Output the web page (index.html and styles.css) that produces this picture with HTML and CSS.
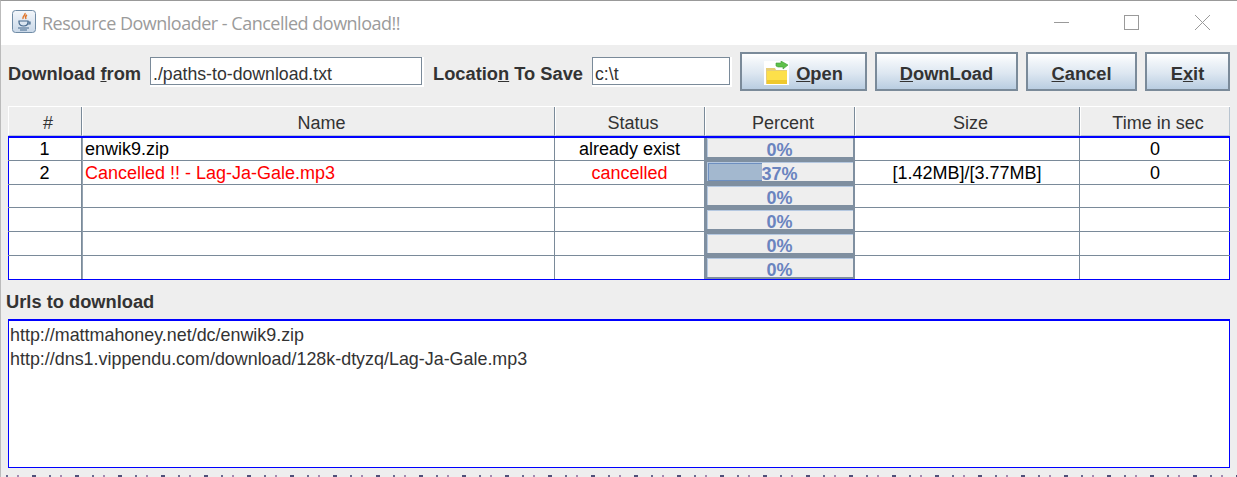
FILE: index.html
```html
<!DOCTYPE html>
<html lang="en">
<head>
<meta charset="utf-8">
<title>Resource Downloader</title>
<link rel="stylesheet" href="styles.css">
</head>
<body>
<div class="window">
  <header class="titlebar">
    <svg class="app-icon" width="24" height="23" viewBox="0 0 24 23">
      <defs><linearGradient id="ig" x1="0" y1="0" x2="0" y2="1"><stop offset="0" stop-color="#f4f7fb"/><stop offset="1" stop-color="#c9d8e8"/></linearGradient></defs>
      <rect x="0.5" y="0.5" width="23" height="22" rx="3" fill="url(#ig)" stroke="#6f8ba5"/>
      <path d="M13 3c1 2-3 3-2 6M15 5c-2 1-2 2-1 4" fill="none" stroke="#e0752a" stroke-width="1.400"/>
      <path d="M7 11h9v1c0 3-2 4-4.500 4S7 15 7 12zM16 12h2v2h-2.500" fill="none" stroke="#44688c" stroke-width="1.200"/>
      <path d="M6 18h11M8 20h7" stroke="#44688c" stroke-width="1.100"/>
    </svg>
    <span class="title">Resource Downloader - Cancelled download!!</span>
    <div class="controls">
      <svg width="70" height="44" viewBox="0 0 70 44"><path d="M27 21.500h15" stroke="#9a9a9a"/></svg>
      <svg width="70" height="44" viewBox="0 0 70 44"><rect x="27.500" y="14.500" width="14" height="14" fill="none" stroke="#9a9a9a"/></svg>
      <svg width="70" height="44" viewBox="0 0 70 44"><path d="M28 14l15 15M43 14L28 29" stroke="#9a9a9a"/></svg>
    </div>
  </header>
  <main class="content">
    <div class="toolbar">
      <label class="lbl lbl-from">Download <u>f</u>rom</label>
      <div class="field field-from">./paths-to-download.txt</div>
      <label class="lbl lbl-loc">Locatio<u>n</u> To Save</label>
      <div class="field field-loc">c:\t</div>
      <button class="btn btn-open">
        <svg width="25" height="24" viewBox="0 0 25 24">
          <rect width="25" height="24" fill="#fff"/>
          <path d="M12 5V2h5V0l7 4-5 4V6h-5z" fill="#5ec04a" stroke="#3d9a35" stroke-width="0.600"/>
          <path d="M2 7h9l1 2h11v14H2z" fill="#e6cd76"/>
          <rect x="3" y="10" width="20" height="13" fill="#fde04a"/>
          <rect x="3" y="19" width="20" height="4" fill="#efc92e"/>
        </svg>
        <span><u>O</u>pen</span>
      </button>
      <button class="btn btn-dl"><span><u>D</u>ownLoad</span></button>
      <button class="btn btn-cancel"><span><u>C</u>ancel</span></button>
      <button class="btn btn-exit"><span>E<u>x</u>it</span></button>
    </div>
    <section class="table">
      <div class="thead">
        <div>#</div><div>Name</div><div>Status</div><div>Percent</div><div>Size</div><div>Time in sec</div>
      </div>
      <div class="tbody">
        <div class="row">
          <div class="c">1</div><div class="name">enwik9.zip</div><div class="c">already exist</div>
          <div class="pct"><div class="bar"><span class="val">0%</span></div></div>
          <div class="c"></div><div class="c">0</div>
        </div>
        <div class="row err">
          <div class="c blk">2</div><div class="name">Cancelled !! - Lag-Ja-Gale.mp3</div><div class="c">cancelled</div>
          <div class="pct"><div class="bar"><div class="fill" style="width:37%"></div><span class="val">37%</span></div></div>
          <div class="c blk">[1.42MB]/[3.77MB]</div><div class="c blk">0</div>
        </div>
        <div class="row"><div></div><div class="name"></div><div></div><div class="pct"><div class="bar"><span class="val">0%</span></div></div><div></div><div></div></div>
        <div class="row"><div></div><div class="name"></div><div></div><div class="pct"><div class="bar"><span class="val">0%</span></div></div><div></div><div></div></div>
        <div class="row"><div></div><div class="name"></div><div></div><div class="pct"><div class="bar"><span class="val">0%</span></div></div><div></div><div></div></div>
        <div class="row"><div></div><div class="name"></div><div></div><div class="pct"><div class="bar"><span class="val">0%</span></div></div><div></div><div></div></div>
      </div>
    </section>
    <h2 class="urls-label">Urls to download</h2>
    <div class="urls">
      <div>http://mattmahoney.net/dc/enwik9.zip</div>
      <div>http://dns1.vippendu.com/download/128k-dtyzq/Lag-Ja-Gale.mp3</div>
    </div>
  </main>
  <div class="under"></div>
</div>
</body>
</html>
```
FILE: styles.css
```css
* { box-sizing: border-box; }
html, body { margin: 0; height: 100%; overflow: hidden; }
body { font-family: "Liberation Sans", Arial, sans-serif; color: #333; background: #eee; }
.window {
  height: 477px; display: flex; flex-direction: column;
  border-top: 1px solid #999; border-left: 1px solid #bbb;
}
.titlebar { height: 44px; flex: none; background: #fff; display: flex; align-items: center; padding-left: 11px; }
.app-icon { flex: none; margin-top: -3px; }
.title { margin-left: 6px; font: 18px "Open Sans", sans-serif; color: #9b9b9b; white-space: nowrap; letter-spacing: -0.5px; }
.controls { margin-left: auto; display: flex; }
.controls svg { display: block; }
.content { flex: 1; min-height: 0; background: #eee; padding: 0 7px; display: flex; flex-direction: column; }
.toolbar { height: 61px; flex: none; display: flex; align-items: center; padding-bottom: 8px; }
.lbl { font-weight: 700; font-size: 18.300px; color: #333; white-space: nowrap; padding-top: 5px; }
.lbl-from { width: 142px; }
.lbl-loc { margin-left: 11px; width: 159px; }
.field {
  height: 28px; margin-top: -1px; background: #fff; border: 1px solid #7a8a99;
  box-shadow: 1px 1px 0 1px #fff; font-size: 17.700px; color: #333; padding: 6px 0 0 2px; white-space: nowrap;
}
.field-from { width: 272px; }
.field-loc { width: 138px; }
.btn {
  height: 39px; padding: 4px 0 0; margin: 0; border: 2px solid #7a8a99;
  background: linear-gradient(#fff 0%, #eef3f8 25%, #dde7f1 55%, #b9cde1 100%);
  font: 700 18.300px "Liberation Sans", Arial, sans-serif; color: #333;
  display: flex; align-items: center; justify-content: center; gap: 7px;
}
.btn svg { margin-top: -2px; }
.btn-open { width: 127px; margin-left: 10px; }
.btn-dl { width: 143px; margin-left: 8px; }
.btn-cancel { width: 111px; margin-left: 8px; }
.btn-exit { width: 85px; margin-left: 8px; }
.table { flex: none; width: 1222px; display: flex; flex-direction: column; }
.thead, .row { display: grid; grid-template-columns: 74px 473px 150px 150px 225px 150px; }
.thead { height: 30px; background: #eee; border-top: 1px solid #fff; font-size: 18px; color: #333; }
.thead > div {
  display: flex; align-items: center; justify-content: center; padding: 4px 0 0 6px;
  border-right: 1px solid #7a8a99; border-left: 1px solid #fff; border-bottom: 1px solid #b8c4d0;
}
.thead > div:last-child { border-right: 1px solid #b8c4d0; }
.tbody { background: #fff; border: 1px solid #00f; border-top-width: 2px; color: #000; font-size: 18px; }
.row { height: 24px; margin: 0 -1px; }
.row:first-child { height: 22px; }
.row:last-child { height: 23px; }
.row > div {
  border-bottom: 1px solid #7a8a99; border-right: 1px solid #7a8a99;
  display: flex; align-items: center; padding: 3px 0 0 3px; white-space: nowrap;
}
.row:first-child > div { padding-top: 1px; }
.row:last-child > div { border-bottom: 0; }
.row > div:first-child { padding-left: 0; }
.row > .name { border-left: 1px solid #94a2b0; padding-left: 2px; }
.row > div:last-child { border-right: 0; }
.row > .c { justify-content: center; padding-left: 0; }
.err { color: #f00; }
.err .blk { color: #000; }
.row > .pct, .row:first-child > .pct { padding: 0; border: 0; background: #7f8fa0; margin-left: -1px; }
.bar {
  position: relative; flex: 1; height: 19px; align-self: flex-start; background: #eee;
  margin: 2px 2px 0 3px; border: 1px solid #b5c8e0; border-right: 0; border-bottom: 0;
  display: flex; align-items: center; justify-content: center; padding-top: 3px;
}
.row:first-child .bar { margin-top: 0; }
.fill { position: absolute; left: 0; top: 0; bottom: 0; background: #a3b8cf; border: 1px solid #6d8fc0; border-width: 1px 0 1px 1px; }
.val { position: relative; font-weight: 700; font-size: 18px; line-height: 16px; color: #6a84bf; margin-right: 2px; }
.urls-label { margin: 0 0 0 -2px; height: 39px; flex: none; padding: 12px 0 0; font-size: 18.300px; line-height: 20px; font-weight: 700; color: #333; }
.urls {
  width: 1222px; height: 149px; flex: none; background: #fff; border: 1px solid #00f; border-top-width: 2px;
  font-size: 17.900px; color: #333; padding: 2px 0 0 1px; line-height: 24px;
}
.under { height: 2px; flex: none; margin-top: auto; background: repeating-linear-gradient(90deg, #eee 0 5px, #6a6a90 5px 7px, #eee 7px 16px, #a08ab0 16px 18px, #eee 18px 31px, #50507a 31px 35px, #eee 35px 43px); }
```
